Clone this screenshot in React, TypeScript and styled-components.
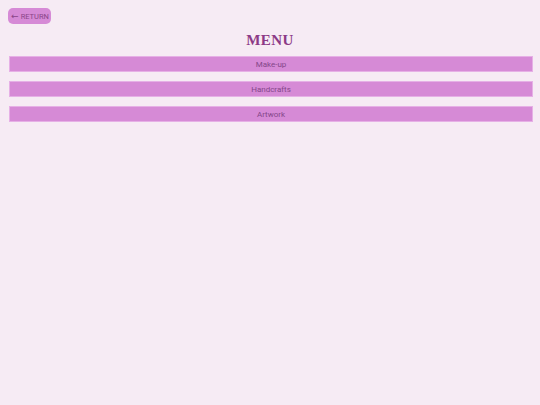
import React from 'react'
import styled, { createGlobalStyle } from 'styled-components'

const LookAndFeel = createGlobalStyle`
  html, body {
    margin: 0;
    background: #f6ebf4;
  }
  body {
    padding: 8px;
    font-family: Roboto, "Liberation Sans", sans-serif;
  }
`

const Container = styled.div`
  display: flex;
  flex-direction: column;
`

const ReturnButton = styled.button`
  align-self: flex-start;
  display: flex;
  align-items: center;
  justify-content: center;
  gap: 2px;
  height: 16px;
  width: 43px;
  padding: 0 0 0 1px;
  border: none;
  border-radius: 5px;
  background: #d68ad6;
  color: #8a4588;
  font-family: Roboto, "Liberation Sans", sans-serif;
  font-size: 7.5px;
  white-space: nowrap;
  cursor: pointer;
`

const Arrow = styled.span`
  font-family: "DejaVu Sans", sans-serif;
  font-size: 9px;
  line-height: 9px;
`

const Title = styled.h1`
  margin: 9px 0 8px;
  text-align: center;
  font-family: "Liberation Serif", "DejaVu Serif", serif;
  font-weight: bold;
  font-size: 15px;
  line-height: 15px;
  letter-spacing: 0.4px;
  color: #8c3a86;
`

const MenuList = styled.div`
  display: flex;
  flex-direction: column;
  gap: 9px;
  margin: 0 -1px 0 1px;
`

const MenuItem = styled.button`
  height: 16px;
  padding: 0;
  border: 1px solid #e6b0e6;
  background: #d68ad6;
  color: #84478a;
  font-family: Roboto, "Liberation Sans", sans-serif;
  font-size: 8px;
  cursor: pointer;
`

const items = ['Make-up', 'Handcrafts', 'Artwork']

const App = () => {
  return (
    <Container>
      <LookAndFeel />
      <ReturnButton>
        <Arrow>←</Arrow>RETURN
      </ReturnButton>
      <Title>MENU</Title>
      <MenuList>
        {items.map((item) => (
          <MenuItem key={item}>{item}</MenuItem>
        ))}
      </MenuList>
    </Container>
  )
}

export default App
